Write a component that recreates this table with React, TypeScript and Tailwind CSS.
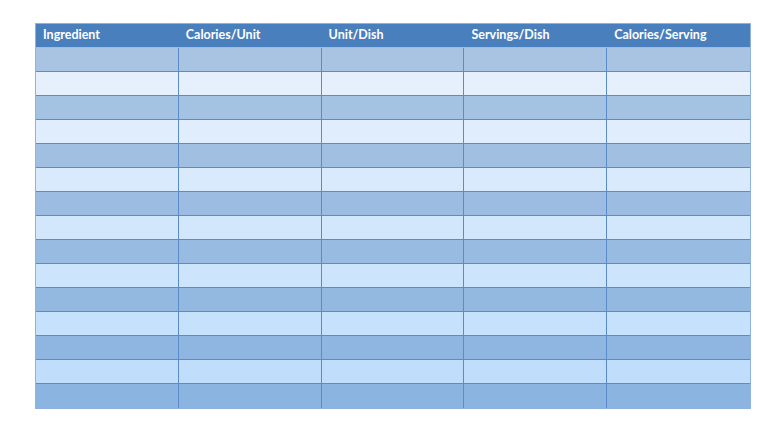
import React from 'react';

const headers = ['Ingredient', 'Calories/Unit', 'Unit/Dish', 'Servings/Dish', 'Calories/Serving'];

// row shades drift from pale to saturated going down the sheet
const rowColors = [
  'bg-[#a8c4e2]',
  'bg-[#e5f0fc]',
  'bg-[#a4c2e2]',
  'bg-[#dfedfc]',
  'bg-[#a0bfe1]',
  'bg-[#d9eafc]',
  'bg-[#9cbde1]',
  'bg-[#d3e7fc]',
  'bg-[#97bbe1]',
  'bg-[#cce4fc]',
  'bg-[#93b9e1]',
  'bg-[#c6e1fc]',
  'bg-[#8fb6e0]',
  'bg-[#c0defc]',
  'bg-[#8bb4e0]',
];

const App: React.FC = () => {
  return (
    <div className="w-[775px] h-[433px] bg-white pt-[23px] pl-[35px]" style={{ fontFamily: 'Lato, "Open Sans", sans-serif' }}>
      <div className="w-[716px] border border-[#8fb2dc]">
        <div className="grid grid-cols-5 h-[24px] bg-[#4a7fbd] border-b border-[#9dbde2]">
          {headers.map((h) => (
            <div key={h} className="pl-[7px] flex items-center text-white text-[12.5px] font-bold">
              {h}
            </div>
          ))}
        </div>
        {rowColors.map((c, i) => (
          <div key={i} className={`grid grid-cols-5 h-[24px] ${c} ${i < rowColors.length - 1 ? 'border-b border-[#5b8cc9]' : ''}`}>
            {headers.map((h, j) => (
              <div key={h} className={j < headers.length - 1 ? 'border-r border-[#5b8cc9]' : ''} />
            ))}
          </div>
        ))}
      </div>
    </div>
  );
};

export default App;
